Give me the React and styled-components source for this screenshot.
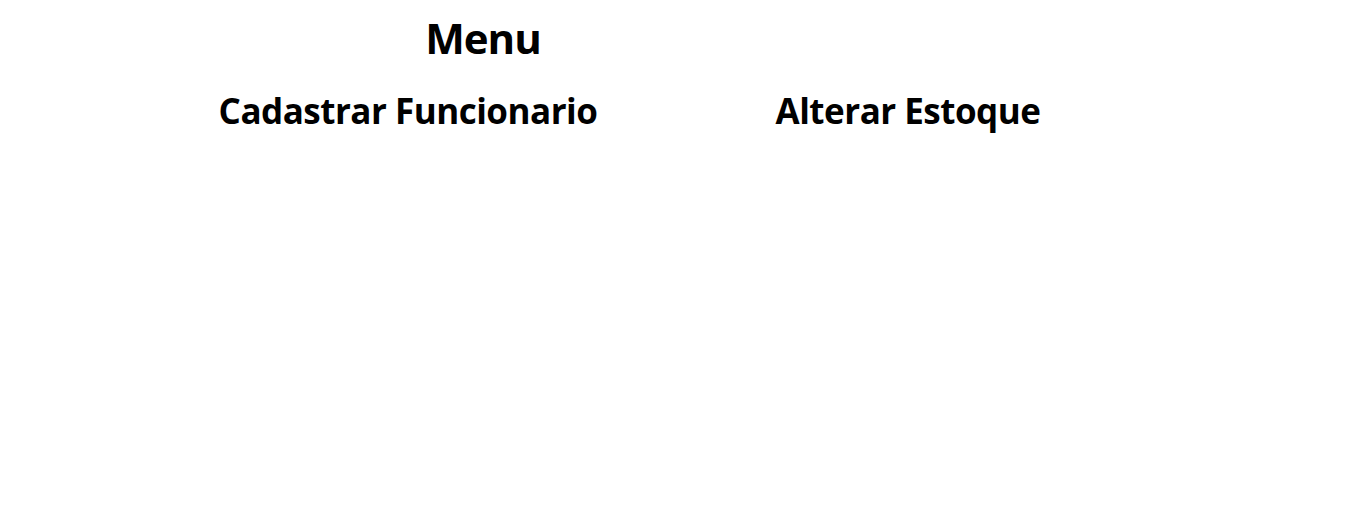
import React from 'react';
import styled, { createGlobalStyle } from 'styled-components';

const GlobalStyle = createGlobalStyle`
  body {
    margin: 0;
    background: #ffffff;
    font-family: "Open Sans", "Noto Sans", sans-serif;
    color: #000000;
  }
`;

const Page = styled.div`
  width: 1354px;
  min-height: 511px;
`;

const Title = styled.h1`
  margin: 0;
  padding-top: 10px;
  width: 966px;
  text-align: center;
  font-size: 42px;
  font-weight: 700;
  line-height: 56px;
  letter-spacing: -1px;
`;

const Options = styled.div`
  display: flex;
  margin-left: 158px;
  margin-top: 23px;
`;

const Option = styled.h2`
  margin: 0;
  width: 500px;
  text-align: center;
  font-size: 35px;
  font-weight: 700;
  line-height: 44px;
  letter-spacing: -0.5px;
  cursor: pointer;
`;

export default function App() {
  return (
    <Page>
      <GlobalStyle />
      <Title>Menu</Title>
      <Options>
        <Option>Cadastrar Funcionario</Option>
        <Option>Alterar Estoque</Option>
      </Options>
    </Page>
  );
}
